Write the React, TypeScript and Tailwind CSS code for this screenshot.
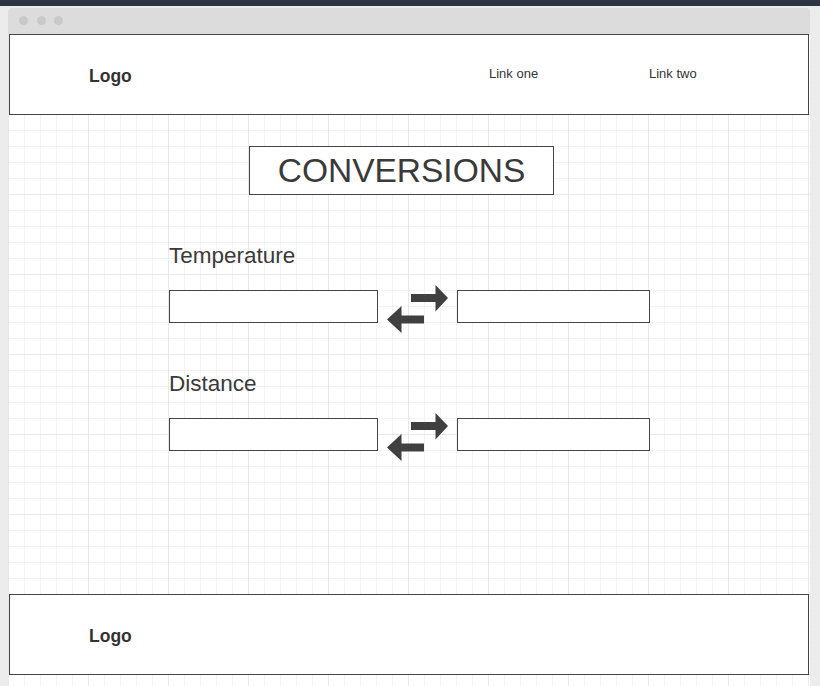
export default function App() {
  return (
    <div className="h-[686px] overflow-hidden bg-[#ececec] font-['Liberation_Sans',Arial,sans-serif] text-[#3a3a3a]">
      <div className="h-[6px] bg-[#2f3542]" />

      {/* window */}
      <div className="ml-[8px] mt-[2px] w-[802px]">
        <div className="flex h-[26px] items-center gap-[8.5px] rounded-t-[4px] bg-[#dcdcdc] pb-[2px] pl-[11px]">
          <span className="h-[9px] w-[9px] rounded-full bg-[#c9c9c9]" />
          <span className="h-[9px] w-[9px] rounded-full bg-[#c9c9c9]" />
          <span className="h-[9px] w-[9px] rounded-full bg-[#c9c9c9]" />
        </div>

        <div className="flex flex-col bg-white bg-[linear-gradient(to_right,#e8e8e8_1px,transparent_1px),linear-gradient(to_bottom,#e8e8e8_1px,transparent_1px),linear-gradient(to_right,#f3f3f3_1px,transparent_1px),linear-gradient(to_bottom,#f3f3f3_1px,transparent_1px)] bg-[size:80px_80px,80px_80px,16px_16px,16px_16px] px-px">
          <header className="flex h-[81px] items-center border border-[#444] bg-white pl-[79px]">
            <span className="mt-[3px] w-[400px] text-[17.5px] font-bold text-[#333]">Logo</span>
            <a className="-mt-[1px] w-[160px] text-[13px] text-[#333]">Link one</a>
            <a className="-mt-[1px] text-[13px] text-[#333]">Link two</a>
          </header>

          <main className="h-[479px] pl-[160px] pt-[31px]">
            <div className="ml-[80px] flex h-[49px] w-[305px] items-center justify-center border border-[#444] bg-white text-[33.5px] leading-none">
              CONVERSIONS
            </div>

            <Converter label="Temperature" className="mt-[48px]" />
            <Converter label="Distance" className="mt-[38px]" />
          </main>

          <footer className="flex h-[81px] items-center border border-[#444] bg-white pl-[79px]">
            <span className="mt-[4px] text-[17.5px] font-bold text-[#333]">Logo</span>
          </footer>

          <div className="h-[20px]" />
        </div>
      </div>
    </div>
  );
}

function Converter({ label, className }: { label: string; className?: string }) {
  return (
    <section className={className}>
      <h2 className="text-[22.5px] leading-[26px]">{label}</h2>
      <div className="mt-[21px] flex items-start">
        <input className="h-[33px] w-[209px] border border-[#444] bg-white outline-none" />
        <ArrowsIcon />
        <input className="ml-[9px] h-[33px] w-[193px] border border-[#444] bg-white outline-none" />
      </div>
    </section>
  );
}

function ArrowsIcon() {
  return (
    <svg width="61" height="48" viewBox="0 0 61 48" className="-mt-[5px] ml-[9px] shrink-0">
      <polygon points="24,9 48.5,9 48.5,0 61,13 48.5,26.5 48.5,17 24,17" fill="#404040" />
      <polygon points="0,34.5 14.5,21 14.5,30.5 37,30.5 37,38.5 14.5,38.5 14.5,48" fill="#404040" />
    </svg>
  );
}
